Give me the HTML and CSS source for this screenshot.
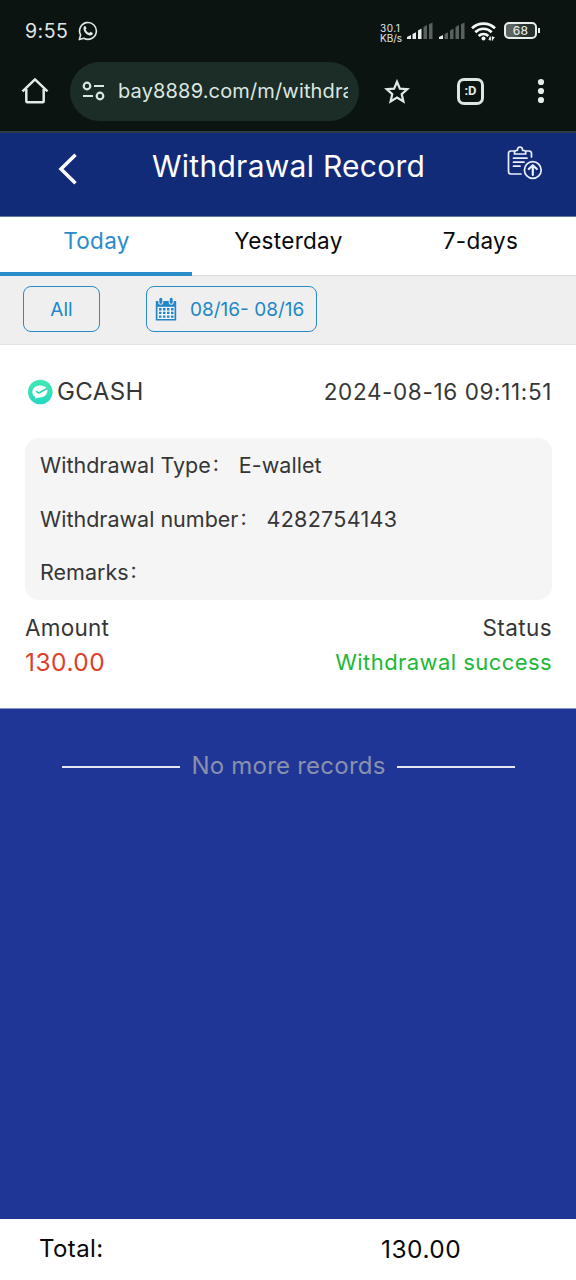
FILE: index.html
```html
<!DOCTYPE html>
<html lang="en">
<head>
<meta charset="utf-8">
<title>Withdrawal Record</title>
<link rel="stylesheet" href="styles.css">
</head>
<body>
<div class="phone">
  <header class="system">
    <div class="statusbar">
      <span class="clock">9:55</span>
      <svg class="whatsapp" width="20" height="20" viewBox="0 0 20 20"><path d="M1.3 18.6 2.6 14A8.4 8.4 0 1 1 5.9 17.3Z" fill="none" stroke="#dfe8e4" stroke-width="1.6" stroke-linejoin="round"/><path d="M6.3 5.3q.5-.5 1.2-.1l1 2.1q.1.4-.9 1.5 1.3 2.4 3.6 3.3l1.2-1.3 2.4 1.2q.2 2.3-2.5 2.5C8.600 14.100 5.400 10.500 5.500 7.200q0-1.200.8-1.900Z" fill="#dfe8e4"/></svg>
      <span class="speed"><span class="rate">30.1</span><span>KB/s</span></span>
      <svg class="signal" width="26" height="18" viewBox="0 0 26 18" fill="#e6edea"><path d="M0 15 4 13V17H0ZM5.500 12 9 10.300V17H5.500ZM11 8.500 14.500 6.500V17H11Z"/><path d="M16.500 5 20 3V17h-3.500ZM22 2.300 25.500.5V17H22Z" fill="#59615e"/></svg>
      <svg class="signal second" width="26" height="18" viewBox="0 0 26 18" fill="#59615e"><path d="M0 15 4 13V17H0Z" fill="#e6edea"/><path d="M5.500 12 9 10.300V17H5.500ZM11 8.500 14.500 6.500V17H11ZM16.500 5 20 3V17h-3.500ZM22 2.300 25.500.5V17H22Z"/></svg>
      <svg class="wifi" width="25" height="19" viewBox="0 0 25 19"><g fill="none" stroke="#f2f7f5" stroke-width="2.700"><path d="M1 6.300a16.500 16.500 0 0 1 23 0"/><path d="M4.300 10.200a11.500 11.500 0 0 1 16.400 0"/><path d="M7.700 14a6.800 6.800 0 0 1 9.600 0"/></g><circle cx="12.500" cy="16.500" r="2" fill="#f2f7f5"/><path d="M19.200 18.500v-4M21.500 18.500v-4" stroke="#f2f7f5" stroke-width="1.300"/><path d="m17.200 17.500 2-2.500v3ZM24 15.500l-2.500 2v-3Z" fill="#f2f7f5"/></svg>
      <span class="battery"><span class="level">68</span></span>
    </div>
    <div class="browserbar">
      <svg class="home" width="28" height="28" viewBox="0 0 28 28"><path d="M1.500 14.300 14 2.300 26.500 14.300M5.300 12V24.300Q5.300 25.300 6.300 25.300H21.700Q22.700 25.300 22.700 24.300V12" fill="none" stroke="#e0ebe5" stroke-width="2.500" stroke-linejoin="round"/></svg>
      <div class="address">
        <svg class="tune" width="24" height="20" viewBox="0 0 24 20" fill="none" stroke="#dbe7e1" stroke-width="2.200"><circle cx="5" cy="5" r="3.300"/><path d="M12 5h10M1 15h10"/><circle cx="18" cy="15" r="3.300"/></svg>
        <span class="url">bay8889.com/m/withdrawal</span>
      </div>
      <svg class="star" width="26" height="26" viewBox="0 0 26 26"><path d="M13 2.700 15.900 9.600 23.300 10.200 17.700 15.100 19.400 22.400 13 18.500 6.600 22.400 8.300 15.100 2.700 10.200 10.100 9.600Z" fill="none" stroke="#e0ebe5" stroke-width="2.200"/></svg>
      <span class="tabcount">:D</span>
      <svg class="menu" width="8" height="26" viewBox="0 0 8 26" fill="#e3ece8"><circle cx="4" cy="4" r="3.100"/><circle cx="4" cy="13" r="3.100"/><circle cx="4" cy="22" r="3.100"/></svg>
    </div>
  </header>

  <div class="titlebar">
    <svg class="back" width="20" height="32" viewBox="0 0 20 32"><path d="M17.500 1.800 3 16 17.500 30.200" fill="none" stroke="#fff" stroke-width="3.500"/></svg>
    <h1 class="title">Withdrawal Record</h1>
    <svg class="report" width="36" height="36" viewBox="0 0 36 36" fill="none" stroke="#e9efff" stroke-width="1.700" stroke-linecap="round" stroke-linejoin="round"><path d="M8 6H4Q1.500 6 1.500 8.500V26.500Q1.500 29 4 29H14M19 6H22Q24.500 6 24.500 8.500V12"/><path d="M7.500 9V7.500Q7.500 5.500 9.300 5.500H10.300Q10.500 2 13 2T15.700 5.500H17Q18.700 5.500 18.700 7.500V9Z"/><path d="M6.500 13.200H20M6.500 17.200H17M6.500 21.200H13"/><circle cx="25.800" cy="25" r="8.400"/><path d="M25.800 30V20.500M21.800 24 25.800 20.200 29.800 24" stroke-width="2.200"/></svg>
  </div>

  <nav class="tabs">
    <span class="tab active">Today</span>
    <span class="tab">Yesterday</span>
    <span class="tab">7-days</span>
  </nav>

  <div class="filters">
    <span class="filter all">All</span>
    <span class="filter range">
      <svg class="calendar" width="22" height="24" viewBox="0 0 22 24"><path d="M.8 4H21.200V23.500H.8Z" fill="#2187c7"/><path d="M2.500 9.800H19.500V22H2.500Z" fill="#f2f5f7"/><path d="M4 12.200H18.500M4 15.900H18.500M4 19.600H18.500" stroke="#2187c7" stroke-width="2.400" stroke-dasharray="2.500 1.500"/><path d="M5.800 3V5.200M16.200 3V5.200" stroke="#efefef" stroke-width="5" stroke-linecap="round"/><path d="M5.800 2.300V5.200M16.200 2.300V5.200" stroke="#2187c7" stroke-width="3" stroke-linecap="round"/></svg>
      <span class="dates">08/16- 08/16</span>
    </span>
  </div>

  <section class="record">
    <div class="record-head">
      <span class="wallet">
        <svg class="wallet-icon" width="26" height="26" viewBox="0 0 26 26"><defs><linearGradient id="mint" x2="0" y2="1"><stop stop-color="#43e9b1"/><stop offset="1" stop-color="#25d8c2"/></linearGradient></defs><circle cx="13.300" cy="13" r="12.300" fill="url(#mint)"/><path d="M8.500 19.700 8 17.500C3.300 15.200 4.700 7 12.700 6.500c6-.4 8.800 3.500 7.400 7.200-1.300 3.500-4.900 5.200-8.800 4.900Z" fill="#fff"/><path d="m9 12.200 2.800 1.700L20 9.500" fill="none" stroke="#32d7b4" stroke-width="1.700"/></svg>
        <span class="wallet-name">GCASH</span>
      </span>
      <span class="timestamp">2024-08-16 09:11:51</span>
    </div>
    <div class="details">
      <div class="detail"><span class="label">Withdrawal Type</span><span class="colon">:</span><span class="value">E-wallet</span></div>
      <div class="detail"><span class="label">Withdrawal number</span><span class="colon">:</span><span class="value number">4282754143</span></div>
      <div class="detail"><span class="label">Remarks</span><span class="colon">:</span></div>
    </div>
    <div class="summary"><span class="amount-label">Amount</span><span class="status-label">Status</span></div>
    <div class="summary results"><span class="amount">130.00</span><span class="status">Withdrawal success</span></div>
  </section>

  <main class="rest">
    <div class="end"><span class="rule"></span><span class="end-text">No more records</span><span class="rule"></span></div>
  </main>

  <footer class="total"><span class="total-label">Total:</span><span class="total-value">130.00</span></footer>
</div>
</body>
</html>
```
FILE: styles.css
```css
* { box-sizing: border-box; }
body { margin: 0; font-family: Inter, "Noto Sans", sans-serif; }
svg { display: block; flex: none; }
.phone { width: 576px; height: 1280px; display: flex; flex-direction: column; overflow: hidden; background: #203696; white-space: nowrap; }

.system { height: 133px; flex: none; background: #0c1412; border-bottom: 2px solid #2c3b48; color: #e0e8e5; }
.statusbar { height: 61px; padding: 0 35px 0 25px; display: flex; align-items: center; }
.clock { font-size: 19.500px; letter-spacing: .5px; line-height: 24px; width: 53px; }
.speed { margin-left: 282px; width: 27px; display: flex; flex-direction: column; font-size: 10px; line-height: 10px; margin-top: 5px; }
.rate { letter-spacing: .5px; }
.signal { margin-top: 1px; }
.second { margin-left: 6px; }
.wifi { margin-left: 6px; margin-top: 1px; }
.battery { position: relative; margin-left: 8px; width: 33px; height: 17px; border: 2px solid #e9efec; border-radius: 5px; background: linear-gradient(90deg, #5b6460 25%, #26302c 60%); text-align: center; }
.battery::after { content: ""; position: absolute; right: -5px; top: 4px; width: 2px; height: 5px; background: #e9efec; }
.level { display: block; font-size: 12px; font-weight: 500; line-height: 13px; letter-spacing: .3px; }
.browserbar { height: 60px; display: flex; align-items: center; padding-left: 21px; }
.address { width: 289px; height: 59px; margin-left: 21px; border-radius: 30px; background: #1c2c27; display: flex; align-items: center; padding: 0 11px 0 12px; }
.url { margin-left: 12px; font-size: 20px; letter-spacing: .15px; line-height: 28px; flex: 1; min-width: 0; overflow: hidden; color: #dce7e2; }
.star { margin-left: 25px; margin-top: 2px; }
.tabcount { margin-left: 47px; width: 27px; height: 27px; border: 3px solid #dce7e2; border-radius: 7px; font: bold 13px/20px Roboto, sans-serif; text-align: center; }
.menu { margin-left: 53px; }

.titlebar { height: 84px; flex: none; background: #122b79; color: #fff; display: flex; border-bottom: 1px solid #65749f; padding-left: 58px; }
.back { margin-top: 20px; }
.title { margin: 15px 0 0 74px; width: 276px; font-weight: 400; font-size: 30px; line-height: 36px; letter-spacing: .27px; }
.report { margin-left: 79px; margin-top: 12px; }

.tabs { height: 59px; flex: none; display: flex; background: #fff; border-bottom: 1px solid #dadada; }
.tab { width: 192px; height: 59px; text-align: center; font-size: 22.500px; line-height: 48px; letter-spacing: .3px; color: #080808; padding-left: 1px; }
.active { color: #2a8ccb; border-bottom: 4px solid #2a8cc8; }

.filters { height: 69px; flex: none; display: flex; align-items: flex-start; gap: 46px; padding: 10px 23px; background: #efefef; border-bottom: 1px solid #e4e4e4; color: #2187c7; }
.filter { height: 46px; border: 1px solid #2a8ac6; border-radius: 8px; display: flex; align-items: center; font-size: 19px; }
.all { width: 77px; justify-content: center; }
.range { width: 171px; padding-left: 8px; }
.dates { margin-left: 13px; letter-spacing: 0; }

.record { height: 363px; flex: none; background: #fff; color: #363636; padding: 0 24px 0 25px; }
.record-head { height: 93px; display: flex; justify-content: space-between; align-items: center; }
.wallet { display: flex; align-items: center; padding-left: 2px; }
.wallet-name { margin-left: 4px; font-size: 24px; letter-spacing: .4px; }
.timestamp { font-size: 22.500px; letter-spacing: .63px; }
.details { height: 162px; border-radius: 14px; background: #f5f5f5; padding: 1px 0 0 15px; }
.detail { height: 53.500px; display: flex; line-height: 53px; font-size: 21.500px; letter-spacing: 0; }
.colon { width: 23px; padding-left: 2px; margin-top: -2px; }
.value { margin-left: 5px; letter-spacing: .05px; }
.number { letter-spacing: .3px; }
.summary { height: 35px; margin-top: 10px; display: flex; justify-content: space-between; line-height: 35px; font-size: 22.500px; letter-spacing: .25px; }
.status-label { letter-spacing: .4px; }
.results { margin-top: 0; line-height: 34px; }
.amount { color: #db4128; font-size: 24.500px; letter-spacing: .5px; }
.status { color: #20b838; font-size: 22px; letter-spacing: .43px; }

.rest { flex: 1; border-top: 1px solid #8996c9; }
.end { display: flex; align-items: center; padding: 41px 61px 0 62px; height: 73px; }
.rule { width: 118px; height: 2px; background: #e4e7f3; margin-top: 2px; }
.end-text { width: 217px; text-align: center; font-size: 24px; line-height: 32px; letter-spacing: .23px; color: #8991ac; }

.total { height: 61px; flex: none; display: flex; background: #fff; color: #080808; padding-left: 39px; font-size: 24px; line-height: 60px; letter-spacing: .4px; }
.total-label { width: 342px; }
.total-value { font-size: 24.500px; letter-spacing: .5px; }
```
